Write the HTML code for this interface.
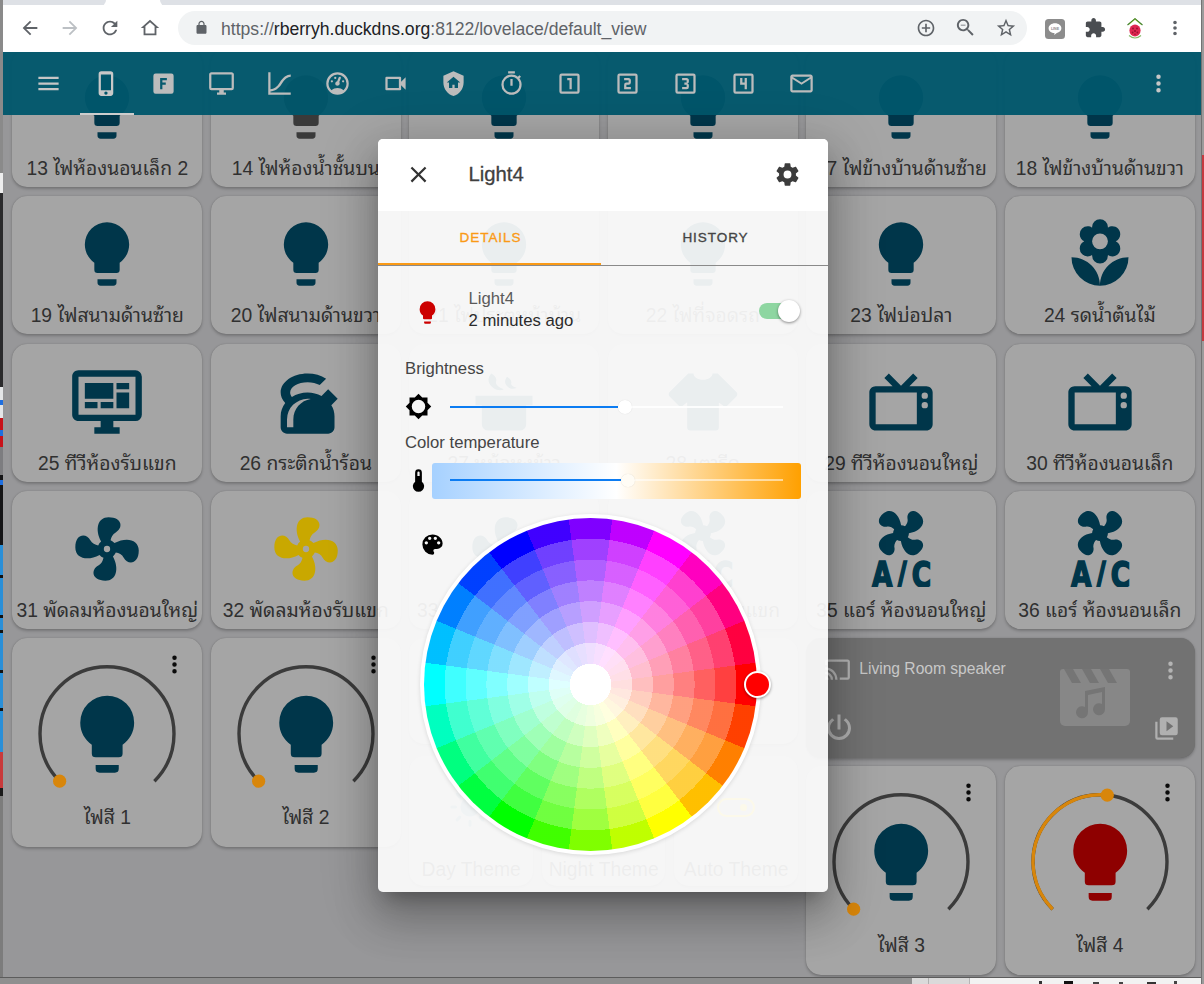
<!DOCTYPE html>
<html lang="th"><head><meta charset="utf-8"><title>Light4</title>
<style>
*{box-sizing:border-box;margin:0;padding:0}
html,body{width:1204px;height:984px;overflow:hidden}
body{position:relative;background:#9b9b9b;font-family:"Liberation Sans","Noto Sans Thai Looped","Sarabun","Loma","Noto Sans Thai",sans-serif;color:#2e2e2e}
#desk{position:absolute;left:0;top:0;width:1204px;height:984px;background:#9a9a9a}
.ds{position:absolute;left:0;width:3px}
#win{position:absolute;left:3px;top:0;width:1198px;height:977px;overflow:hidden;background:#979799}
#tabstrip{position:absolute;left:0;top:0;width:1199px;height:6px;background:#fff}
#tabstrip i{position:absolute;left:0;top:-6px;width:103px;height:11.5px;background:#dee1e6;border-radius:0 0 6px 0}
#tabstrip b{position:absolute;left:157px;top:-6px;width:1042px;height:11.5px;background:#dee1e6;border-radius:0 0 0 6px}
#toolbar{position:absolute;left:0;top:5px;width:1199px;height:47px;background:#fff}
#omni{position:absolute;left:175px;top:6px;width:849px;height:34px;border-radius:17px;background:#f1f3f4}
#url{position:absolute;left:43px;top:8px;font-size:17.6px;line-height:20px;color:#5f6368;white-space:nowrap;letter-spacing:0}
#url b{font-weight:normal;color:#202124}
#page{position:absolute;left:0;top:0;width:1199px;height:978px}
.card{position:absolute;background:#a5a5a5;border-radius:15px;box-shadow:0 1.5px 3px rgba(0,0,0,.22),0 0 1px rgba(0,0,0,.2);width:190px;height:138.6px}
.bi{position:absolute;left:57px;top:20.5px;width:76px;height:76px}
.bl{position:absolute;left:-10px;right:-10px;top:106.5px;text-align:center;font-size:19.3px;line-height:28px;white-space:nowrap;color:#303030}
.lc{height:208.7px}
.ll{position:absolute;left:0;right:0;top:165.5px;text-align:center;font-size:19.3px;line-height:28px;color:#303030}
.media{background:#727272}
.mt{position:absolute;left:53px;top:20px;font-size:15.6px;line-height:22px;color:#c8c8c8}
#hdr{position:absolute;left:0;top:52px;width:1199px;height:63px;background:rgba(0,87,108,.955)}
#dlg{position:absolute;left:375px;top:139px;width:450px;height:753px;background:rgba(253,253,253,.925);border-radius:5px;box-shadow:0 12px 17px -8px rgba(0,0,0,.27),0 27px 43px 3px rgba(0,0,0,.19),0 10px 52px 9px rgba(0,0,0,.15);overflow:hidden}
#dh{position:absolute;left:0;top:0;width:450px;height:72px;background:rgba(255,255,255,.97)}
#dh .t{position:absolute;left:90.5px;top:21px;font-size:20.3px;line-height:28px;color:#404040;font-weight:normal;-webkit-text-stroke:.3px #404040}
.tab{position:absolute;top:72px;width:225px;height:54px;text-align:center;font-size:13.5px;line-height:54px;letter-spacing:.95px;-webkit-text-stroke:.35px currentColor}
.lab{position:absolute;left:27px;font-size:16.7px;line-height:22px;color:#454545}
.sl{position:absolute;left:72px;width:333px;height:2.2px;background:rgba(255,255,255,.85)}
.sl i{position:absolute;left:0;top:0;height:2.2px;background:#0c7cf2}
.kn{position:absolute;width:13.5px;height:13.5px;border-radius:50%;background:#fff;box-shadow:0 0 1px rgba(0,0,0,.15)}
#wheel{position:absolute;left:41.9px;top:374.8px;width:341px;height:341px;border-radius:50%;background:#fff;box-shadow:0 1px 4px rgba(0,0,0,.12)}
#wheel i{position:absolute;left:3.8px;top:3.8px;width:333.4px;height:333.4px;border-radius:50%;background:radial-gradient(circle closest-side,rgba(255,255,255,1.000) 0.0% 12.5%,rgba(255,255,255,0.875) 12.5% 25.0%,rgba(255,255,255,0.750) 25.0% 37.5%,rgba(255,255,255,0.625) 37.5% 50.0%,rgba(255,255,255,0.500) 50.0% 62.5%,rgba(255,255,255,0.375) 62.5% 75.0%,rgba(255,255,255,0.250) 75.0% 87.5%,rgba(255,255,255,0.000) 87.5% 100.0%),conic-gradient(from 82.5deg,hsl(0,100%,50%) 0deg 15deg,hsl(15,100%,50%) 15deg 30deg,hsl(30,100%,50%) 30deg 45deg,hsl(45,100%,50%) 45deg 60deg,hsl(60,100%,50%) 60deg 75deg,hsl(75,100%,50%) 75deg 90deg,hsl(90,100%,50%) 90deg 105deg,hsl(105,100%,50%) 105deg 120deg,hsl(120,100%,50%) 120deg 135deg,hsl(135,100%,50%) 135deg 150deg,hsl(150,100%,50%) 150deg 165deg,hsl(165,100%,50%) 165deg 180deg,hsl(180,100%,50%) 180deg 195deg,hsl(195,100%,50%) 195deg 210deg,hsl(210,100%,50%) 210deg 225deg,hsl(225,100%,50%) 225deg 240deg,hsl(240,100%,50%) 240deg 255deg,hsl(255,100%,50%) 255deg 270deg,hsl(270,100%,50%) 270deg 285deg,hsl(285,100%,50%) 285deg 300deg,hsl(300,100%,50%) 300deg 315deg,hsl(315,100%,50%) 315deg 330deg,hsl(330,100%,50%) 330deg 345deg,hsl(345,100%,50%) 345deg 360deg)}
</style></head><body>
<div id="desk">
 <div class="ds" style="top:0;height:173px;background:#8a8a8a"></div>
 <div class="ds" style="top:173px;height:20px;background:#eee"></div>
 <div class="ds" style="top:193px;height:194px;background:#2a2a2c"></div>
 <div class="ds" style="top:387px;height:31px;background:#e4e6e8"></div>
 <div class="ds" style="top:400px;height:5px;background:#1f6fe0"></div>
 <div class="ds" style="top:418px;height:29px;background:#c8121a"></div>
 <div class="ds" style="top:430px;height:6px;background:#1f6fe0"></div>
 <div class="ds" style="top:447px;height:28px;background:#7d7d80"></div>
 <div class="ds" style="top:475px;height:70px;background:#151517"></div>
 <div class="ds" style="top:480px;height:5px;background:#1f6fe0"></div>
 <div class="ds" style="top:545px;height:207px;background:#2a8fd8"></div>
 <div class="ds" style="top:575px;height:3px;background:#111"></div>
 <div class="ds" style="top:615px;height:3px;background:#111"></div>
 <div class="ds" style="top:630px;height:3px;background:#111"></div>
 <div class="ds" style="top:670px;height:3px;background:#111"></div>
 <div class="ds" style="top:708px;height:3px;background:#111"></div>
 <div class="ds" style="top:752px;height:36px;background:#c93a3c"></div>
 <div class="ds" style="top:788px;height:8px;background:#1b1b1b"></div>
 <div class="ds" style="top:796px;height:188px;background:#7c7c7c"></div>
 <div style="position:absolute;left:0;top:977px;width:1204px;height:7px;background:#8f8f8f;border-top:1px solid #5c5c5c"></div>
 <div style="position:absolute;left:912px;top:978px;width:58px;height:6px;background:#dadada;border-right:1px solid #b5b5b5"></div>
 <div style="position:absolute;left:928px;top:978px;width:1px;height:6px;background:#b0b0b0"></div>
 <div style="position:absolute;left:970px;top:978px;width:234px;height:6px;background:#f2f2f2"></div>
 <div style="position:absolute;left:1039px;top:981px;width:3px;height:3px;background:#333"></div>
 <div style="position:absolute;left:1064px;top:981px;width:9px;height:3px;background:#111"></div>
 <div style="position:absolute;left:1093px;top:982px;width:6px;height:2px;background:#444"></div>
 <div style="position:absolute;left:1119px;top:982px;width:4px;height:2px;background:#444"></div>
 <div style="position:absolute;left:1147px;top:982px;width:9px;height:2px;background:#333"></div>
 <div style="position:absolute;left:1174px;top:981px;width:3px;height:3px;background:#444"></div>
 <div style="position:absolute;left:1201px;top:0;width:3px;height:984px;background:#9b9b9b;border-left:1px solid #737373"></div><div style="position:absolute;left:1202px;top:155px;width:2px;height:186px;background:#c63a40"></div>
</div>
<div id="win">
 <div id="page">
 <div class="card bc" style="left:9.3px;top:48.5px"><svg class="bi" style="fill:#00364a" viewBox="0 0 24 24"><path d="M12,2A7,7 0 0,0 5,9C5,11.38 6.19,13.47 8,14.74V17A1,1 0 0,0 9,18H15A1,1 0 0,0 16,17V14.74C17.81,13.47 19,11.38 19,9A7,7 0 0,0 12,2M9,21A1,1 0 0,0 10,22H14A1,1 0 0,0 15,21V20H9V21Z"/></svg><div class="bl">13 ไฟห้องนอนเล็ก 2</div></div><div class="card bc" style="left:207.8px;top:48.5px"><svg class="bi" style="fill:#3a3a3a" viewBox="0 0 24 24"><path d="M12,2A7,7 0 0,0 5,9C5,11.38 6.19,13.47 8,14.74V17A1,1 0 0,0 9,18H15A1,1 0 0,0 16,17V14.74C17.81,13.47 19,11.38 19,9A7,7 0 0,0 12,2M9,21A1,1 0 0,0 10,22H14A1,1 0 0,0 15,21V20H9V21Z"/></svg><div class="bl">14 ไฟห้องน้ำชั้นบน</div></div><div class="card bc" style="left:406.3px;top:48.5px"><svg class="bi" style="fill:#00364a" viewBox="0 0 24 24"><path d="M12,2A7,7 0 0,0 5,9C5,11.38 6.19,13.47 8,14.74V17A1,1 0 0,0 9,18H15A1,1 0 0,0 16,17V14.74C17.81,13.47 19,11.38 19,9A7,7 0 0,0 12,2M9,21A1,1 0 0,0 10,22H14A1,1 0 0,0 15,21V20H9V21Z"/></svg><div class="bl">15 ไฟห้องน้ำชั้นล่าง</div></div><div class="card bc" style="left:604.8px;top:48.5px"><svg class="bi" style="fill:#00364a" viewBox="0 0 24 24"><path d="M12,2A7,7 0 0,0 5,9C5,11.38 6.19,13.47 8,14.74V17A1,1 0 0,0 9,18H15A1,1 0 0,0 16,17V14.74C17.81,13.47 19,11.38 19,9A7,7 0 0,0 12,2M9,21A1,1 0 0,0 10,22H14A1,1 0 0,0 15,21V20H9V21Z"/></svg><div class="bl">16 ไฟหน้าบ้าน</div></div><div class="card bc" style="left:803.3px;top:48.5px"><svg class="bi" style="fill:#00364a" viewBox="0 0 24 24"><path d="M12,2A7,7 0 0,0 5,9C5,11.38 6.19,13.47 8,14.74V17A1,1 0 0,0 9,18H15A1,1 0 0,0 16,17V14.74C17.81,13.47 19,11.38 19,9A7,7 0 0,0 12,2M9,21A1,1 0 0,0 10,22H14A1,1 0 0,0 15,21V20H9V21Z"/></svg><div class="bl">17 ไฟข้างบ้านด้านซ้าย</div></div><div class="card bc" style="left:1001.8px;top:48.5px"><svg class="bi" style="fill:#00364a" viewBox="0 0 24 24"><path d="M12,2A7,7 0 0,0 5,9C5,11.38 6.19,13.47 8,14.74V17A1,1 0 0,0 9,18H15A1,1 0 0,0 16,17V14.74C17.81,13.47 19,11.38 19,9A7,7 0 0,0 12,2M9,21A1,1 0 0,0 10,22H14A1,1 0 0,0 15,21V20H9V21Z"/></svg><div class="bl">18 ไฟข้างบ้านด้านขวา</div></div><div class="card bc" style="left:9.3px;top:195.9px"><svg class="bi" style="fill:#00364a" viewBox="0 0 24 24"><path d="M12,2A7,7 0 0,0 5,9C5,11.38 6.19,13.47 8,14.74V17A1,1 0 0,0 9,18H15A1,1 0 0,0 16,17V14.74C17.81,13.47 19,11.38 19,9A7,7 0 0,0 12,2M9,21A1,1 0 0,0 10,22H14A1,1 0 0,0 15,21V20H9V21Z"/></svg><div class="bl">19 ไฟสนามด้านซ้าย</div></div><div class="card bc" style="left:207.8px;top:195.9px"><svg class="bi" style="fill:#00364a" viewBox="0 0 24 24"><path d="M12,2A7,7 0 0,0 5,9C5,11.38 6.19,13.47 8,14.74V17A1,1 0 0,0 9,18H15A1,1 0 0,0 16,17V14.74C17.81,13.47 19,11.38 19,9A7,7 0 0,0 12,2M9,21A1,1 0 0,0 10,22H14A1,1 0 0,0 15,21V20H9V21Z"/></svg><div class="bl">20 ไฟสนามด้านขวา</div></div><div class="card bc" style="left:406.3px;top:195.9px"><svg class="bi" style="fill:#00364a" viewBox="0 0 24 24"><path d="M12,2A7,7 0 0,0 5,9C5,11.38 6.19,13.47 8,14.74V17A1,1 0 0,0 9,18H15A1,1 0 0,0 16,17V14.74C17.81,13.47 19,11.38 19,9A7,7 0 0,0 12,2M9,21A1,1 0 0,0 10,22H14A1,1 0 0,0 15,21V20H9V21Z"/></svg><div class="bl">21 ไฟประตูหน้าบ้าน</div></div><div class="card bc" style="left:604.8px;top:195.9px"><svg class="bi" style="fill:#00364a" viewBox="0 0 24 24"><path d="M12,2A7,7 0 0,0 5,9C5,11.38 6.19,13.47 8,14.74V17A1,1 0 0,0 9,18H15A1,1 0 0,0 16,17V14.74C17.81,13.47 19,11.38 19,9A7,7 0 0,0 12,2M9,21A1,1 0 0,0 10,22H14A1,1 0 0,0 15,21V20H9V21Z"/></svg><div class="bl">22 ไฟที่จอดรถ</div></div><div class="card bc" style="left:803.3px;top:195.9px"><svg class="bi" style="fill:#00364a" viewBox="0 0 24 24"><path d="M12,2A7,7 0 0,0 5,9C5,11.38 6.19,13.47 8,14.74V17A1,1 0 0,0 9,18H15A1,1 0 0,0 16,17V14.74C17.81,13.47 19,11.38 19,9A7,7 0 0,0 12,2M9,21A1,1 0 0,0 10,22H14A1,1 0 0,0 15,21V20H9V21Z"/></svg><div class="bl">23 ไฟบ่อปลา</div></div><div class="card bc" style="left:1001.8px;top:195.9px"><svg class="bi" style="fill:#00364a" viewBox="0 0 24 24"><path d="M3,13A9,9 0 0,0 12,22C12,17 7.97,13 3,13M12,5.5A2.5,2.5 0 0,1 14.5,8A2.5,2.5 0 0,1 12,10.5A2.5,2.5 0 0,1 9.5,8A2.5,2.5 0 0,1 12,5.5M5.6,10.25A2.5,2.5 0 0,0 8.1,12.75C8.63,12.75 9.12,12.58 9.5,12.31C9.5,12.37 9.5,12.43 9.5,12.5A2.5,2.5 0 0,0 12,15A2.5,2.5 0 0,0 14.5,12.5C14.5,12.43 14.5,12.37 14.5,12.31C14.88,12.58 15.37,12.75 15.9,12.75C17.28,12.75 18.4,11.63 18.4,10.25C18.4,9.25 17.81,8.4 16.97,8C17.81,7.6 18.4,6.74 18.4,5.75C18.4,4.37 17.28,3.25 15.9,3.25C15.37,3.25 14.88,3.41 14.5,3.69C14.5,3.63 14.5,3.56 14.5,3.5A2.5,2.5 0 0,0 12,1A2.5,2.5 0 0,0 9.5,3.5C9.5,3.56 9.5,3.63 9.5,3.69C9.12,3.41 8.63,3.25 8.1,3.25A2.5,2.5 0 0,0 5.6,5.75C5.6,6.74 6.19,7.6 7.03,8C6.19,8.4 5.6,9.25 5.6,10.25M12,22A9,9 0 0,0 21,13C16,13 12,17 12,22Z"/></svg><div class="bl">24 รดน้ำต้นไม้</div></div><div class="card bc" style="left:9.3px;top:343.5px"><svg class="bi" style="fill:#00364a" viewBox="0 0 24 24"><path d="M21,16V4H3V16H21M21,2A2,2 0 0,1 23,4V16A2,2 0 0,1 21,18H14V20H16V22H8V20H10V18H3C1.89,18 1,17.1 1,16V4C1,2.89 1.89,2 3,2H21M5,6H14V11H5V6M15,6H19V8H15V6M19,9V14H15V9H19M5,12H9V14H5V12M10,12H14V14H10V12Z"/></svg><div class="bl">25 ทีวีห้องรับแขก</div></div><div class="card bc" style="left:207.8px;top:343.5px"><svg class="bi" style="fill:#00364a" viewBox="0 0 24 24"><path d="M12.5,3C7.81,3 4,5.69 4,9V9C4,10.19 4.5,11.34 5.44,12.33C4.53,13.5 4,14.96 4,16.5C4,17.64 4,18.83 4,20C4,21.11 4.89,22 6,22H19C20.11,22 21,21.11 21,20C21,18.85 21,17.61 21,16.5C21,15.28 20.66,14.07 20,13L22,11L19,8L16.9,10.1C15.58,9.38 14.05,9 12.5,9C10.65,9 8.95,9.53 7.55,10.41C7.19,9.97 7,9.5 7,9C7,7.21 9.46,5.75 12.5,5.75C13.93,5.75 15.3,6.08 16.33,6.67L18.35,4.65C16.77,3.59 14.68,3 12.5,3M12.5,11C12.84,11 13.17,11.04 13.5,11.09C10.39,11.57 8,14.25 8,17.5V20H6V17.5A6.5,6.5 0 0,1 12.5,11Z"/></svg><div class="bl">26 กระติกน้ำร้อน</div></div><div class="card bc" style="left:406.3px;top:343.5px"><svg class="bi" style="fill:#00364a" viewBox="0 0 24 24"><path d="M19,19A2,2 0 0,1 17,21H7A2,2 0 0,1 5,19V13H3V10H21V13H19V19M8,3C8,3 6,5 8,7C10,9 12,8 12,8C12,8 9,7 9.5,5.5C10,4 8,3 8,3M13,4C13,4 11.5,5.5 13,7C14.5,8.5 16,7.5 16,7.5C16,7.5 14,7 14.3,6C14.6,5 13,4 13,4Z"/></svg><div class="bl">27 หม้อหุงข้าว</div></div><div class="card bc" style="left:604.8px;top:343.5px"><svg class="bi" style="fill:#00364a" viewBox="0 0 24 24"><path d="M16,21H8A1,1 0 0,1 7,20V12.07L5.7,13.07C5.31,13.46 4.68,13.46 4.29,13.07L1.46,10.29C1.07,9.9 1.07,9.27 1.46,8.88L7.34,3H9C9,4.1 10.34,5 12,5C13.66,5 15,4.1 15,3H16.66L22.54,8.88C22.93,9.27 22.93,9.9 22.54,10.29L19.71,13.12C19.32,13.5 18.69,13.5 18.3,13.12L17,12.12V20A1,1 0 0,1 16,21Z"/></svg><div class="bl">28 เตารีด</div></div><div class="card bc" style="left:803.3px;top:343.5px"><svg class="bi" style="fill:#00364a" viewBox="0 0 24 24"><path d="M8.16,3L6.75,4.41L9.34,7H4C2.89,7 2,7.89 2,9V19C2,20.11 2.89,21 4,21H20C21.11,21 22,20.11 22,19V9C22,7.89 21.11,7 20,7H14.66L17.25,4.41L15.84,3L12,6.84L8.16,3M4,9H17V19H4V9M19.5,9A1,1 0 0,1 20.5,10A1,1 0 0,1 19.5,11A1,1 0 0,1 18.5,10A1,1 0 0,1 19.5,9M19.5,12A1,1 0 0,1 20.5,13A1,1 0 0,1 19.5,14A1,1 0 0,1 18.5,13A1,1 0 0,1 19.5,12Z"/></svg><div class="bl">29 ทีวีห้องนอนใหญ่</div></div><div class="card bc" style="left:1001.8px;top:343.5px"><svg class="bi" style="fill:#00364a" viewBox="0 0 24 24"><path d="M8.16,3L6.75,4.41L9.34,7H4C2.89,7 2,7.89 2,9V19C2,20.11 2.89,21 4,21H20C21.11,21 22,20.11 22,19V9C22,7.89 21.11,7 20,7H14.66L17.25,4.41L15.84,3L12,6.84L8.16,3M4,9H17V19H4V9M19.5,9A1,1 0 0,1 20.5,10A1,1 0 0,1 19.5,11A1,1 0 0,1 18.5,10A1,1 0 0,1 19.5,9M19.5,12A1,1 0 0,1 20.5,13A1,1 0 0,1 19.5,14A1,1 0 0,1 18.5,13A1,1 0 0,1 19.5,12Z"/></svg><div class="bl">30 ทีวีห้องนอนเล็ก</div></div><div class="card bc" style="left:9.3px;top:490.8px"><svg class="bi" style="fill:#00364a" viewBox="0 0 24 24"><path d="M12,11A1,1 0 0,0 11,12A1,1 0 0,0 12,13A1,1 0 0,0 13,12A1,1 0 0,0 12,11M12.5,2C17,2 17.11,5.57 14.75,6.75C13.76,7.24 13.32,8.29 13.13,9.22C13.61,9.42 14.03,9.73 14.35,10.13C18.05,8.13 22.03,8.92 22.03,12.5C22.03,17 18.46,17.1 17.28,14.73C16.78,13.74 15.72,13.3 14.79,13.11C14.59,13.59 14.28,14 13.88,14.34C15.87,18.03 15.08,22 11.5,22C7,22 6.91,18.42 9.27,17.24C10.25,16.75 10.69,15.71 10.89,14.79C10.4,14.59 9.97,14.27 9.65,13.87C5.96,15.85 2,15.07 2,11.5C2,7 5.56,6.89 6.74,9.26C7.24,10.25 8.29,10.68 9.22,10.87C9.41,10.39 9.73,9.97 10.14,9.65C8.15,5.96 8.94,2 12.5,2Z"/></svg><div class="bl">31 พัดลมห้องนอนใหญ่</div></div><div class="card bc" style="left:207.8px;top:490.8px"><svg class="bi" style="fill:#c9a800" viewBox="0 0 24 24"><path d="M12,11A1,1 0 0,0 11,12A1,1 0 0,0 12,13A1,1 0 0,0 13,12A1,1 0 0,0 12,11M12.5,2C17,2 17.11,5.57 14.75,6.75C13.76,7.24 13.32,8.29 13.13,9.22C13.61,9.42 14.03,9.73 14.35,10.13C18.05,8.13 22.03,8.92 22.03,12.5C22.03,17 18.46,17.1 17.28,14.73C16.78,13.74 15.72,13.3 14.79,13.11C14.59,13.59 14.28,14 13.88,14.34C15.87,18.03 15.08,22 11.5,22C7,22 6.91,18.42 9.27,17.24C10.25,16.75 10.69,15.71 10.89,14.79C10.4,14.59 9.97,14.27 9.65,13.87C5.96,15.85 2,15.07 2,11.5C2,7 5.56,6.89 6.74,9.26C7.24,10.25 8.29,10.68 9.22,10.87C9.41,10.39 9.73,9.97 10.14,9.65C8.15,5.96 8.94,2 12.5,2Z"/></svg><div class="bl">32 พัดลมห้องรับแขก</div></div><div class="card bc" style="left:406.3px;top:490.8px"><svg class="bi" style="fill:#00364a" viewBox="0 0 24 24"><path d="M12,11A1,1 0 0,0 11,12A1,1 0 0,0 12,13A1,1 0 0,0 13,12A1,1 0 0,0 12,11M12.5,2C17,2 17.11,5.57 14.75,6.75C13.76,7.24 13.32,8.29 13.13,9.22C13.61,9.42 14.03,9.73 14.35,10.13C18.05,8.13 22.03,8.92 22.03,12.5C22.03,17 18.46,17.1 17.28,14.73C16.78,13.74 15.72,13.3 14.79,13.11C14.59,13.59 14.28,14 13.88,14.34C15.87,18.03 15.08,22 11.5,22C7,22 6.91,18.42 9.27,17.24C10.25,16.75 10.69,15.71 10.89,14.79C10.4,14.59 9.97,14.27 9.65,13.87C5.96,15.85 2,15.07 2,11.5C2,7 5.56,6.89 6.74,9.26C7.24,10.25 8.29,10.68 9.22,10.87C9.41,10.39 9.73,9.97 10.14,9.65C8.15,5.96 8.94,2 12.5,2Z"/></svg><div class="bl">33 พัดลมห้องนอนเล็ก</div></div><div class="card bc" style="left:604.8px;top:490.8px"><svg class="bi" style="fill:#00364a;color:#00364a" viewBox="0 0 24 24"><path d="M6.59,0.66C8.93,-1.15 11.47,1.06 12.04,4.5C12.47,4.5 12.89,4.62 13.27,4.84C13.79,4.24 14.25,3.42 14.07,2.5C13.65,0.35 16.06,-1.39 18.35,1.58C20.16,3.92 17.95,6.46 14.5,7.03C14.5,7.46 14.39,7.89 14.16,8.27C14.76,8.78 15.58,9.24 16.5,9.06C18.63,8.64 20.38,11.04 17.41,13.34C15.07,15.15 12.53,12.94 11.96,9.5C11.53,9.5 11.11,9.37 10.74,9.15C10.22,9.75 9.75,10.58 9.93,11.5C10.35,13.64 7.94,15.39 5.65,12.42C3.83,10.07 6.05,7.53 9.5,6.97C9.5,6.54 9.63,6.12 9.85,5.74C9.25,5.23 8.43,4.76 7.5,4.94C5.37,5.36 3.62,2.96 6.59,0.66Z"/><text transform="scale(.76 1)" x="3.700 14.100 20.300" y="24" font-family="DejaVu Sans,Liberation Sans,sans-serif" font-size="11" font-weight="bold" stroke-width=".55" stroke="currentColor">A/C</text></svg><div class="bl">34 แอร์ ห้องรับแขก</div></div><div class="card bc" style="left:803.3px;top:490.8px"><svg class="bi" style="fill:#00364a;color:#00364a" viewBox="0 0 24 24"><path d="M6.59,0.66C8.93,-1.15 11.47,1.06 12.04,4.5C12.47,4.5 12.89,4.62 13.27,4.84C13.79,4.24 14.25,3.42 14.07,2.5C13.65,0.35 16.06,-1.39 18.35,1.58C20.16,3.92 17.95,6.46 14.5,7.03C14.5,7.46 14.39,7.89 14.16,8.27C14.76,8.78 15.58,9.24 16.5,9.06C18.63,8.64 20.38,11.04 17.41,13.34C15.07,15.15 12.53,12.94 11.96,9.5C11.53,9.5 11.11,9.37 10.74,9.15C10.22,9.75 9.75,10.58 9.93,11.5C10.35,13.64 7.94,15.39 5.65,12.42C3.83,10.07 6.05,7.53 9.5,6.97C9.5,6.54 9.63,6.12 9.85,5.74C9.25,5.23 8.43,4.76 7.5,4.94C5.37,5.36 3.62,2.96 6.59,0.66Z"/><text transform="scale(.76 1)" x="3.700 14.100 20.300" y="24" font-family="DejaVu Sans,Liberation Sans,sans-serif" font-size="11" font-weight="bold" stroke-width=".55" stroke="currentColor">A/C</text></svg><div class="bl">35 แอร์ ห้องนอนใหญ่</div></div><div class="card bc" style="left:1001.8px;top:490.8px"><svg class="bi" style="fill:#00364a;color:#00364a" viewBox="0 0 24 24"><path d="M6.59,0.66C8.93,-1.15 11.47,1.06 12.04,4.5C12.47,4.5 12.89,4.62 13.27,4.84C13.79,4.24 14.25,3.42 14.07,2.5C13.65,0.35 16.06,-1.39 18.35,1.58C20.16,3.92 17.95,6.46 14.5,7.03C14.5,7.46 14.39,7.89 14.16,8.27C14.76,8.78 15.58,9.24 16.5,9.06C18.63,8.64 20.38,11.04 17.41,13.34C15.07,15.15 12.53,12.94 11.96,9.5C11.53,9.5 11.11,9.37 10.74,9.15C10.22,9.75 9.75,10.58 9.93,11.5C10.35,13.64 7.94,15.39 5.65,12.42C3.83,10.07 6.05,7.53 9.5,6.97C9.5,6.54 9.63,6.12 9.85,5.74C9.25,5.23 8.43,4.76 7.5,4.94C5.37,5.36 3.62,2.96 6.59,0.66Z"/><text transform="scale(.76 1)" x="3.700 14.100 20.300" y="24" font-family="DejaVu Sans,Liberation Sans,sans-serif" font-size="11" font-weight="bold" stroke-width=".55" stroke="currentColor">A/C</text></svg><div class="bl">36 แอร์ ห้องนอนเล็ก</div></div><div class="card lc" style="left:9.3px;top:638.0px"><svg style="position:absolute;left:0;top:0" width="190" height="208" viewBox="0 0 190 208"><path d="M47.62,143.18 A67,67 0 1 1 142.38,143.18" fill="none" stroke="#3b3b3b" stroke-width="3.4"/><circle cx="47.62" cy="143.18" r="6.6" fill="#d8860b"/></svg><svg style="position:absolute;left:48.8px;top:49.8px;width:92.4px;height:92.4px;fill:#00364a;" viewBox="0 0 24 24"><path d="M12,2A7,7 0 0,0 5,9C5,11.38 6.19,13.47 8,14.74V17A1,1 0 0,0 9,18H15A1,1 0 0,0 16,17V14.74C17.81,13.47 19,11.38 19,9A7,7 0 0,0 12,2M9,21A1,1 0 0,0 10,22H14A1,1 0 0,0 15,21V20H9V21Z"/></svg><svg style="position:absolute;left:149px;top:13px;width:27px;height:27px;fill:#0a0a0a;" viewBox="0 0 24 24"><path d="M12,16A2,2 0 0,1 14,18A2,2 0 0,1 12,20A2,2 0 0,1 10,18A2,2 0 0,1 12,16M12,10A2,2 0 0,1 14,12A2,2 0 0,1 12,14A2,2 0 0,1 10,12A2,2 0 0,1 12,10M12,4A2,2 0 0,1 14,6A2,2 0 0,1 12,8A2,2 0 0,1 10,6A2,2 0 0,1 12,4Z"/></svg><div class="ll">ไฟสี 1</div></div><div class="card lc" style="left:207.8px;top:638.0px"><svg style="position:absolute;left:0;top:0" width="190" height="208" viewBox="0 0 190 208"><path d="M47.62,143.18 A67,67 0 1 1 142.38,143.18" fill="none" stroke="#3b3b3b" stroke-width="3.4"/><circle cx="47.62" cy="143.18" r="6.6" fill="#d8860b"/></svg><svg style="position:absolute;left:48.8px;top:49.8px;width:92.4px;height:92.4px;fill:#00364a;" viewBox="0 0 24 24"><path d="M12,2A7,7 0 0,0 5,9C5,11.38 6.19,13.47 8,14.74V17A1,1 0 0,0 9,18H15A1,1 0 0,0 16,17V14.74C17.81,13.47 19,11.38 19,9A7,7 0 0,0 12,2M9,21A1,1 0 0,0 10,22H14A1,1 0 0,0 15,21V20H9V21Z"/></svg><svg style="position:absolute;left:149px;top:13px;width:27px;height:27px;fill:#0a0a0a;" viewBox="0 0 24 24"><path d="M12,16A2,2 0 0,1 14,18A2,2 0 0,1 12,20A2,2 0 0,1 10,18A2,2 0 0,1 12,16M12,10A2,2 0 0,1 14,12A2,2 0 0,1 12,14A2,2 0 0,1 10,12A2,2 0 0,1 12,10M12,4A2,2 0 0,1 14,6A2,2 0 0,1 12,8A2,2 0 0,1 10,6A2,2 0 0,1 12,4Z"/></svg><div class="ll">ไฟสี 2</div></div><div class="card lc" style="left:803.3px;top:766.2px"><svg style="position:absolute;left:0;top:0" width="190" height="208" viewBox="0 0 190 208"><path d="M47.62,143.18 A67,67 0 1 1 142.38,143.18" fill="none" stroke="#3b3b3b" stroke-width="3.4"/><circle cx="47.62" cy="143.18" r="6.6" fill="#d8860b"/></svg><svg style="position:absolute;left:48.8px;top:49.8px;width:92.4px;height:92.4px;fill:#00364a;" viewBox="0 0 24 24"><path d="M12,2A7,7 0 0,0 5,9C5,11.38 6.19,13.47 8,14.74V17A1,1 0 0,0 9,18H15A1,1 0 0,0 16,17V14.74C17.81,13.47 19,11.38 19,9A7,7 0 0,0 12,2M9,21A1,1 0 0,0 10,22H14A1,1 0 0,0 15,21V20H9V21Z"/></svg><svg style="position:absolute;left:149px;top:13px;width:27px;height:27px;fill:#0a0a0a;" viewBox="0 0 24 24"><path d="M12,16A2,2 0 0,1 14,18A2,2 0 0,1 12,20A2,2 0 0,1 10,18A2,2 0 0,1 12,16M12,10A2,2 0 0,1 14,12A2,2 0 0,1 12,14A2,2 0 0,1 10,12A2,2 0 0,1 12,10M12,4A2,2 0 0,1 14,6A2,2 0 0,1 12,8A2,2 0 0,1 10,6A2,2 0 0,1 12,4Z"/></svg><div class="ll">ไฟสี 3</div></div><div class="card lc" style="left:1001.8px;top:766.2px"><svg style="position:absolute;left:0;top:0" width="190" height="208" viewBox="0 0 190 208"><path d="M47.62,143.18 A67,67 0 1 1 142.38,143.18" fill="none" stroke="#3b3b3b" stroke-width="3.4"/><path d="M47.62,143.18 A67,67 0 0 1 102.25,29.19" fill="none" stroke="#d8860b" stroke-width="3.4"/><circle cx="102.25" cy="29.19" r="6.6" fill="#d8860b"/></svg><svg style="position:absolute;left:48.8px;top:49.8px;width:92.4px;height:92.4px;fill:#8e0000;" viewBox="0 0 24 24"><path d="M12,2A7,7 0 0,0 5,9C5,11.38 6.19,13.47 8,14.74V17A1,1 0 0,0 9,18H15A1,1 0 0,0 16,17V14.74C17.81,13.47 19,11.38 19,9A7,7 0 0,0 12,2M9,21A1,1 0 0,0 10,22H14A1,1 0 0,0 15,21V20H9V21Z"/></svg><svg style="position:absolute;left:149px;top:13px;width:27px;height:27px;fill:#0a0a0a;" viewBox="0 0 24 24"><path d="M12,16A2,2 0 0,1 14,18A2,2 0 0,1 12,20A2,2 0 0,1 10,18A2,2 0 0,1 12,16M12,10A2,2 0 0,1 14,12A2,2 0 0,1 12,14A2,2 0 0,1 10,12A2,2 0 0,1 12,10M12,4A2,2 0 0,1 14,6A2,2 0 0,1 12,8A2,2 0 0,1 10,6A2,2 0 0,1 12,4Z"/></svg><div class="ll">ไฟสี 4</div></div><div class="card media" style="left:803.3px;top:638px;width:388.5px;height:120px">
<svg style="position:absolute;left:18px;top:18px;width:27px;height:27px;fill:#b5b5b5;" viewBox="0 0 24 24"><path d="M1,10V12A9,9 0 0,1 10,21H12C12,14.92 7.07,10 1,10M1,14V16A5,5 0 0,1 6,21H8A7,7 0 0,0 1,14M1,18V21H4A3,3 0 0,0 1,18M21,3H3C1.89,3 1,3.89 1,5V8H3V5H21V19H14V21H21A2,2 0 0,0 23,19V5C23,3.89 22.1,3 21,3Z"/></svg>
<div class="mt">Living Room speaker</div>
<svg style="position:absolute;left:350.5px;top:19px;width:27px;height:27px;fill:#b4b4b4;" viewBox="0 0 24 24"><path d="M12,16A2,2 0 0,1 14,18A2,2 0 0,1 12,20A2,2 0 0,1 10,18A2,2 0 0,1 12,16M12,10A2,2 0 0,1 14,12A2,2 0 0,1 12,14A2,2 0 0,1 10,12A2,2 0 0,1 12,10M12,4A2,2 0 0,1 14,6A2,2 0 0,1 12,8A2,2 0 0,1 10,6A2,2 0 0,1 12,4Z"/></svg>
<svg style="position:absolute;left:253px;top:25px;width:72px;height:66px" viewBox="0 0 72 66"><path fill="#878787" d="M4,6 H68 a3,3 0 0 1 3,3 V58 a5,5 0 0 1 -5,5 H6 a5,5 0 0 1 -5,-5 V9 a3,3 0 0 1 3,-3 Z"/><path fill="#757575" d="M14,6 l8,14 h-9 l-8,-14z M32,6 l8,14 h-9 l-8,-14z M50,6 l8,14 h-9 l-8,-14z M46,24 v22 a6,6 0 1 1 -3,-5 v-12 l-14,3 v17 a6,6 0 1 1 -3,-5 v-16z"/></svg>
<svg style="position:absolute;left:15px;top:72px;width:36px;height:36px;fill:#b0b0b0;" viewBox="0 0 24 24"><path d="M16.56,5.44L15.11,6.89C16.84,7.94 18,9.83 18,12A6,6 0 0,1 12,18A6,6 0 0,1 6,12C6,9.83 7.16,7.94 8.88,6.88L7.44,5.44C5.36,6.88 4,9.28 4,12A8,8 0 0,0 12,20A8,8 0 0,0 20,12C20,9.28 18.64,6.88 16.56,5.44M13,3H11V13H13"/></svg>
<svg style="position:absolute;left:347px;top:77px;width:27px;height:27px;fill:#b0b0b0;" viewBox="0 0 24 24"><path d="M4,6H2V20A2,2 0 0,0 4,22H18V20H4V6M20,2H8A2,2 0 0,0 6,4V16A2,2 0 0,0 8,18H20A2,2 0 0,0 22,16V4A2,2 0 0,0 20,2M12,14.5V5.5L18,10L12,14.5Z"/></svg>
</div><div class="card" style="left:406.3px;top:638px;width:388.5px;height:106px"></div><div class="card th" style="left:406.3px;top:756px;width:123.7px;height:130px"><div class="bl" style="top:99.5px">Day Theme</div><svg style="position:absolute;left:38px;top:28px;width:46px;height:46px" viewBox="0 0 24 24"><circle cx="12" cy="12" r="5" fill="#4d7f8c"/><g stroke="#4d7f8c" stroke-width="1.600" stroke-linecap="round"><path d="M12,2.500v2M12,19.500v2M2.500,12h2M19.500,12h2M5.300,5.300l1.400,1.400M17.300,17.300l1.400,1.400M5.300,18.700l1.400-1.400M17.300,6.700l1.400-1.400"/></g></svg></div><div class="card th" style="left:538.8px;top:756px;width:123.7px;height:130px"><div class="bl" style="top:99.5px">Night Theme</div><svg style="position:absolute;left:40px;top:30px;width:44px;height:44px" viewBox="0 0 24 24"><path fill="#4d7f8c" d="M17.750,4.090L15.220,6.030L16.130,9.090L13.500,7.280L10.870,9.090L11.780,6.030L9.250,4.090L12.440,4L13.500,1L14.560,4L17.750,4.090M21.250,11L19.610,12.250L20.200,14.230L18.500,13.060L16.800,14.230L17.390,12.250L15.750,11L17.810,10.950L18.500,9L19.190,10.950L21.250,11M18.970,15.950C19.800,15.870 20.690,17.050 20.160,17.800C19.840,18.250 19.500,18.670 19.080,19.070C15.170,23 8.840,23 4.940,19.070C1.030,15.170 1.030,8.830 4.940,4.930C5.340,4.530 5.760,4.170 6.210,3.850C6.960,3.320 8.140,4.210 8.060,5.040C7.790,7.900 8.750,10.870 10.950,13.060C13.140,15.260 16.100,16.220 18.970,15.950Z"/></svg></div><div class="card th" style="left:671.3px;top:756px;width:123.7px;height:130px"><div class="bl" style="top:99.5px">Auto Theme</div><div style="position:absolute;left:43px;top:42px;width:38px;height:19px;border-radius:10px;border:2.500px solid #e8c200"></div><div style="position:absolute;left:66px;top:48px;width:7px;height:7px;border-radius:50%;background:#e8c200"></div></div>
 </div>
 <div id="hdr"><svg style="position:absolute;left:32.2px;top:18.099999999999994px;width:27px;height:27px;fill:#c6c6c6;" viewBox="0 0 24 24"><path d="M3,6H21V8H3V6M3,11H21V13H3V11M3,16H21V18H3V16Z"/></svg><svg style="position:absolute;left:89.5px;top:18.0px;width:27px;height:27px;fill:#c8c8c8;" viewBox="0 0 24 24"><path d="M16,18H7V4H16M11.5,22A1.5,1.5 0 0,1 10,20.5A1.5,1.5 0 0,1 11.5,19A1.5,1.5 0 0,1 13,20.5A1.5,1.5 0 0,1 11.5,22M15.5,1H7.5A2.5,2.5 0 0,0 5,3.5V20.5A2.5,2.5 0 0,0 7.5,23H15.5A2.5,2.5 0 0,0 18,20.5V3.5A2.5,2.5 0 0,0 15.5,1Z"/></svg><svg style="position:absolute;left:147.47px;top:18.0px;width:27px;height:27px;fill:#bcbcbc;" viewBox="0 0 24 24"><path d="M9,7V17H11V13H14V11H11V9H15V7H9M5,3H19A2,2 0 0,1 21,5V19A2,2 0 0,1 19,21H5A2,2 0 0,1 3,19V5A2,2 0 0,1 5,3Z"/></svg><svg style="position:absolute;left:205.44px;top:18.0px;width:27px;height:27px;fill:#bcbcbc;" viewBox="0 0 24 24"><path d="M21,16H3V4H21M21,2H3C1.89,2 1,2.89 1,4V16A2,2 0 0,0 3,18H10V20H8V22H16V20H14V18H21A2,2 0 0,0 23,16V4C23,2.89 22.1,2 21,2Z"/></svg><svg style="position:absolute;left:263.40999999999997px;top:18.0px;width:27px;height:27px;fill:#bcbcbc;" viewBox="0 0 24 24"><path d="M4 19V20H22V22H2V2H4V17C7 17 10 15 12.1 11.4C15.1 6.4 18.4 4 22 4V6C19.2 6 16.5 8.1 13.9 12.5C11.3 16.6 7.7 19 4 19Z"/></svg><svg style="position:absolute;left:321.38px;top:18.0px;width:27px;height:27px;fill:#bcbcbc;" viewBox="0 0 24 24"><path d="M12,2A10,10 0 0,0 2,12A10,10 0 0,0 12,22A10,10 0 0,0 22,12A10,10 0 0,0 12,2M12,4A8,8 0 0,1 20,12C20,14.4 19,16.5 17.3,18C15.9,16.7 14,16 12,16C10,16 8.2,16.7 6.7,18C5,16.5 4,14.4 4,12A8,8 0 0,1 12,4M14,5.89C13.62,5.9 13.26,6.15 13.1,6.54L11.81,9.77L11.71,10C11,10.13 10.41,10.6 10.14,11.26C9.73,12.29 10.23,13.45 11.26,13.86C12.29,14.27 13.45,13.77 13.86,12.74C14.12,12.08 14,11.32 13.57,10.76L13.67,10.5L14.96,7.29L14.97,7.26C15.17,6.75 14.92,6.17 14.41,5.96C14.28,5.91 14.15,5.89 14,5.89M10,6A1,1 0 0,0 9,7A1,1 0 0,0 10,8A1,1 0 0,0 11,7A1,1 0 0,0 10,6M7,9A1,1 0 0,0 6,10A1,1 0 0,0 7,11A1,1 0 0,0 8,10A1,1 0 0,0 7,9M17,9A1,1 0 0,0 16,10A1,1 0 0,0 17,11A1,1 0 0,0 18,10A1,1 0 0,0 17,9Z"/></svg><svg style="position:absolute;left:379.35px;top:18.0px;width:27px;height:27px;fill:#bcbcbc;" viewBox="0 0 24 24"><path d="M15,8V16H5V8H15M16,6H4A1,1 0 0,0 3,7V17A1,1 0 0,0 4,18H16A1,1 0 0,0 17,17V13.5L21,17.5V6.5L17,10.5V7A1,1 0 0,0 16,6Z"/></svg><svg style="position:absolute;left:437.32px;top:18.0px;width:27px;height:27px;fill:#bcbcbc;" viewBox="0 0 24 24"><path d="M11,13H13V16H16V11H18L12,6L6,11H8V16H11V13M12,1L21,5V11C21,16.55 17.16,21.74 12,23C6.84,21.74 3,16.55 3,11V5L12,1Z"/></svg><svg style="position:absolute;left:495.28999999999996px;top:18.0px;width:27px;height:27px;fill:#bcbcbc;" viewBox="0 0 24 24"><path d="M12,20A7,7 0 0,1 5,13A7,7 0 0,1 12,6A7,7 0 0,1 19,13A7,7 0 0,1 12,20M19.03,7.39L20.45,5.97C20,5.46 19.55,5 19.04,4.56L17.62,6C16.07,4.74 14.12,4 12,4A9,9 0 0,0 3,13A9,9 0 0,0 12,22C17,22 21,17.97 21,13C21,10.88 20.26,8.93 19.03,7.39M11,14H13V8H11M15,1H9V3H15V1Z"/></svg><svg style="position:absolute;left:553.26px;top:18.0px;width:27px;height:27px;fill:#bcbcbc;" viewBox="0 0 24 24"><path d="M19,19H5V5H19M19,3H5A2,2 0 0,0 3,5V19A2,2 0 0,0 5,21H19A2,2 0 0,0 21,19V5A2,2 0 0,0 19,3M12,17H14V7H10V9H12"/></svg><svg style="position:absolute;left:611.23px;top:18.0px;width:27px;height:27px;fill:#bcbcbc;" viewBox="0 0 24 24"><path d="M15,15H11V13H13A2,2 0 0,0 15,11V9C15,7.89 14.1,7 13,7H9V9H13V11H11A2,2 0 0,0 9,13V17H15M19,19H5V5H19M19,3H5A2,2 0 0,0 3,5V19A2,2 0 0,0 5,21H19A2,2 0 0,0 21,19V5A2,2 0 0,0 19,3Z"/></svg><svg style="position:absolute;left:669.2px;top:18.0px;width:27px;height:27px;fill:#bcbcbc;" viewBox="0 0 24 24"><path d="M15,15V13.5A1.5,1.5 0 0,0 13.5,12A1.5,1.5 0 0,0 15,10.5V9C15,7.89 14.1,7 13,7H9V9H13V11H11V13H13V15H9V17H13A2,2 0 0,0 15,15M19,19H5V5H19M19,3H5A2,2 0 0,0 3,5V19A2,2 0 0,0 5,21H19A2,2 0 0,0 21,19V5A2,2 0 0,0 19,3Z"/></svg><svg style="position:absolute;left:727.17px;top:18.0px;width:27px;height:27px;fill:#bcbcbc;" viewBox="0 0 24 24"><path d="M13,17H15V7H13V11H11V7H9V13H13M19,19H5V5H19M19,3H5A2,2 0 0,0 3,5V19A2,2 0 0,0 5,21H19A2,2 0 0,0 21,19V5A2,2 0 0,0 19,3Z"/></svg><svg style="position:absolute;left:785.14px;top:18.0px;width:27px;height:27px;fill:#bcbcbc;" viewBox="0 0 24 24"><path d="M22 6C22 4.9 21.1 4 20 4H4C2.9 4 2 4.9 2 6V18C2 19.1 2.9 20 4 20H20C21.1 20 22 19.1 22 18V6M20 6L12 11L4 6H20M20 18H4V8L12 13L20 8V18Z"/></svg><svg style="position:absolute;left:1141.5px;top:18.0px;width:27px;height:27px;fill:#c6c6c6;" viewBox="0 0 24 24"><path d="M12,16A2,2 0 0,1 14,18A2,2 0 0,1 12,20A2,2 0 0,1 10,18A2,2 0 0,1 12,16M12,10A2,2 0 0,1 14,12A2,2 0 0,1 12,14A2,2 0 0,1 10,12A2,2 0 0,1 12,10M12,4A2,2 0 0,1 14,6A2,2 0 0,1 12,8A2,2 0 0,1 10,6A2,2 0 0,1 12,4Z"/></svg><div style="position:absolute;left:77px;top:60.7px;width:54px;height:2.3px;background:#cdcdcd"></div></div>
 <div id="tabstrip"><i></i><b></b></div>
 <div id="toolbar">
  <svg style="position:absolute;left:16px;top:12px;width:22px;height:22px" viewBox="0 0 24 24"><path fill="#5f6368" d="M20,11H7.83l5.59-5.59L12,4l-8,8 8,8 1.41-1.41L7.83,13H20z"/></svg>
  <svg style="position:absolute;left:56px;top:12px;width:22px;height:22px" viewBox="0 0 24 24"><path fill="#bcc0c4" d="M4,11h12.17l-5.59-5.59L12,4l8,8-8,8-1.41-1.41L16.17,13H4z"/></svg>
  <svg style="position:absolute;left:96px;top:12px;width:22px;height:22px" viewBox="0 0 24 24"><path fill="#5f6368" d="M17.65,6.35C16.2,4.9 14.21,4 12,4c-4.42,0-7.99,3.58-7.99,8s3.57,8 7.99,8c3.73,0 6.84-2.55 7.73-6h-2.08c-.82,2.33-3.04,4-5.65,4-3.31,0-6-2.69-6-6s2.69-6 6-6c1.66,0 3.14.69 4.22,1.78L13,11h7V4l-2.35,2.35z"/></svg>
  <svg style="position:absolute;left:136px;top:12px;width:22px;height:22px" viewBox="0 0 24 24"><path fill="#5f6368" d="M12,5.69l5,4.5V18H7v-7.81l5-4.5M12,3L2,12h3v8h14v-8h3L12,3z"/></svg>
  <div id="omni">
   <svg style="position:absolute;left:16px;top:9px;width:15px;height:15px" viewBox="0 0 24 24"><path fill="#5f6368" d="M18,8h-1V6c0-2.76-2.24-5-5-5S7,3.240 7,6v2H6c-1.100,0-2,.9-2,2v10c0,1.100.9,2 2,2h12c1.100,0 2-.9 2-2V10c0-1.100-.9-2-2-2zM9,6c0-1.660 1.340-3 3-3s3,1.340 3,3v2H9V6z"/></svg>
   <div id="url">https://<b>rberryh.duckdns.org</b>:8122/lovelace/default_view</div>
   <svg style="position:absolute;left:738px;top:7px;width:20px;height:20px" viewBox="0 0 24 24"><path fill="#5f6368" d="M12,2C6.480,2 2,6.480 2,12s4.480,10 10,10 10-4.480 10-10S17.520,2 12,2zm0,18c-4.410,0-8-3.590-8-8s3.590-8 8-8 8,3.590 8,8-3.590,8-8,8zm1-13h-2v4H7v2h4v4h2v-4h4v-2h-4V7z"/></svg>
   <svg style="position:absolute;left:776px;top:4.5px;width:23px;height:23px" viewBox="0 0 24 24"><path fill="#5f6368" d="M15.500,14h-.79l-.28-.27C15.410,12.590 16,11.110 16,9.500 16,5.910 13.090,3 9.500,3S3,5.910 3,9.500 5.910,16 9.500,16c1.610,0 3.090-.59 4.230-1.570l.27.28v.79l5,4.990L20.490,19l-4.990-5zm-6,0C7.010,14 5,11.990 5,9.500S7.010,5 9.500,5 14,7.010 14,9.500 11.990,14 9.500,14zM7,9h5v1H7z"/></svg>
   <svg style="position:absolute;left:817px;top:6px;width:22px;height:22px" viewBox="0 0 24 24"><path fill="#5f6368" d="M22,9.240l-7.190-.62L12,2 9.190,8.630 2,9.240l5.460,4.730L5.820,21 12,17.270 18.180,21l-1.630-7.030L22,9.240zM12,15.400l-3.760,2.270 1-4.280-3.320-2.880 4.380-.38L12,6.100l1.710,4.040 4.380.38-3.320,2.880 1,4.280L12,15.400z"/></svg>
  </div>
  <div style="position:absolute;left:1042px;top:14px;width:20px;height:20px;border-radius:3.5px;background:#8c8c8c"></div>
  <svg style="position:absolute;left:1042px;top:14px;width:20px;height:20px" viewBox="0 0 20 20"><path fill="#fff" d="M10,4.200c3.600,0 6.400,2.200 6.400,5 0,2.300-2,4.200-4.600,4.800l-2.600,2 .3-1.900C6.300,13.900 3.600,11.900 3.600,9.200c0-2.800 2.800-5 6.400-5z"/><text x="10" y="10.700" text-anchor="middle" font-size="3.600" font-weight="bold" fill="#8c8c8c" font-family="Liberation Sans,sans-serif">LINE</text></svg>
  <svg style="position:absolute;left:1081px;top:12px;width:22px;height:22px" viewBox="0 0 24 24"><path fill="#4a4d51" d="M20.500,11H19V7c0-1.100-.9-2-2-2h-4V3.500C13,2.120 11.880,1 10.500,1S8,2.120 8,3.500V5H4c-1.100,0-1.990.9-1.990,2v3.800H3.500c1.490,0 2.700,1.210 2.700,2.700s-1.210,2.700-2.700,2.700H2V20c0,1.100.9,2 2,2h3.800v-1.500c0-1.490 1.210-2.700 2.700-2.700 1.490,0 2.700,1.210 2.700,2.700V22H17c1.100,0 2-.9 2-2v-4h1.500c1.380,0 2.500-1.120 2.500-2.500S21.880,11 20.500,11z"/></svg>
  <svg style="position:absolute;left:1119px;top:11px;width:26px;height:26px" viewBox="0 0 26 26"><path d="M13,2 L20,8.500 L18.500,8.500 L13,4 L7.500,8.500 L6,8.500Z" fill="#c9e265"/><path d="M5.500,9 L13,2.600 L20.500,9" fill="none" stroke="#3f7f2c" stroke-width="1.100"/><ellipse cx="13" cy="14.500" rx="5.600" ry="6" fill="#df2650"/><g fill="#9c1233"><circle cx="11" cy="12.500" r="1"/><circle cx="15" cy="12.500" r="1"/><circle cx="13" cy="15" r="1.100"/><circle cx="10.600" cy="16.500" r=".9"/><circle cx="15.400" cy="16.500" r=".9"/><circle cx="13" cy="18.300" r=".8"/></g><path d="M7,19.500 Q13,24.500 19,19.500" fill="none" stroke="#86b86a" stroke-width="1.200"/></svg>

  <svg style="position:absolute;left:1161px;top:12px;width:22px;height:22px;fill:#5f6368;" viewBox="0 0 24 24"><path d="M12,16A2,2 0 0,1 14,18A2,2 0 0,1 12,20A2,2 0 0,1 10,18A2,2 0 0,1 12,16M12,10A2,2 0 0,1 14,12A2,2 0 0,1 12,14A2,2 0 0,1 10,12A2,2 0 0,1 12,10M12,4A2,2 0 0,1 14,6A2,2 0 0,1 12,8A2,2 0 0,1 10,6A2,2 0 0,1 12,4Z"/></svg>
 </div>
 <div id="dlg">
  <div id="dh"><svg style="position:absolute;left:26.9px;top:21.6px;width:27px;height:27px;fill:#333;" viewBox="0 0 24 24"><path d="M19,6.41L17.59,5L12,10.59L6.41,5L5,6.41L10.59,12L5,17.59L6.41,19L12,13.41L17.59,19L19,17.59L13.41,12L19,6.41Z"/></svg><div class="t">Light4</div><svg style="position:absolute;left:395.8px;top:21.5px;width:27px;height:27px;fill:#3c3c3c;" viewBox="0 0 24 24"><path d="M12,15.5A3.5,3.5 0 0,1 8.5,12A3.5,3.5 0 0,1 12,8.5A3.5,3.5 0 0,1 15.5,12A3.5,3.5 0 0,1 12,15.5M19.43,12.97C19.47,12.65 19.5,12.33 19.5,12C19.5,11.67 19.47,11.34 19.43,11L21.54,9.37C21.73,9.22 21.78,8.95 21.66,8.73L19.66,5.27C19.54,5.05 19.27,4.96 19.05,5.05L16.56,6.05C16.04,5.66 15.5,5.32 14.87,5.07L14.5,2.42C14.46,2.18 14.25,2 14,2H10C9.75,2 9.54,2.18 9.5,2.42L9.13,5.07C8.5,5.32 7.96,5.66 7.44,6.05L4.95,5.05C4.73,4.96 4.46,5.05 4.34,5.27L2.34,8.73C2.21,8.95 2.27,9.22 2.46,9.37L4.57,11C4.53,11.34 4.5,11.67 4.5,12C4.5,12.33 4.53,12.65 4.57,12.97L2.46,14.63C2.27,14.78 2.21,15.05 2.34,15.27L4.34,18.73C4.46,18.95 4.73,19.03 4.95,18.95L7.44,17.94C7.96,18.34 8.5,18.68 9.13,18.93L9.5,21.58C9.54,21.82 9.75,22 10,22H14C14.25,22 14.46,21.82 14.5,21.58L14.87,18.93C15.5,18.67 16.04,18.34 16.56,17.94L19.05,18.95C19.27,19.03 19.54,18.95 19.66,18.73L21.66,15.27C21.78,15.05 21.73,14.78 21.54,14.63L19.43,12.97Z"/></svg></div>
  <div class="tab" style="left:0;color:#fa9a16">DETAILS</div>
  <div class="tab" style="left:225px;color:#444">HISTORY</div>
  <div style="position:absolute;left:0;top:125.6px;width:450px;height:1.2px;background:#8a8a8a"></div>
  <div style="position:absolute;left:0;top:123.6px;width:223px;height:2.8px;background:#fa9a16"></div>
  <svg style="position:absolute;left:35.9px;top:160px;width:27px;height:27px;fill:#cc0000;" viewBox="0 0 24 24"><path d="M12,2A7,7 0 0,0 5,9C5,11.38 6.19,13.47 8,14.74V17A1,1 0 0,0 9,18H15A1,1 0 0,0 16,17V14.74C17.81,13.47 19,11.38 19,9A7,7 0 0,0 12,2M9,21A1,1 0 0,0 10,22H14A1,1 0 0,0 15,21V20H9V21Z"/></svg>
  <div class="lab" style="left:90.5px;top:149px;color:#5a5a5a">Light4</div>
  <div class="lab" style="left:90.5px;top:171px;color:#2b2b2b">2 minutes ago</div>
  <div style="position:absolute;left:381px;top:163.5px;width:40px;height:16px;border-radius:8px;background:#8ed6a1"></div>
  <div style="position:absolute;left:399.5px;top:160.5px;width:22.5px;height:22.5px;border-radius:50%;background:#fff;box-shadow:0 1px 3px rgba(0,0,0,.45)"></div>
  <div class="lab" style="top:219px">Brightness</div>
  <svg style="position:absolute;left:26.9px;top:254.2px;width:27px;height:27px;fill:#000;" viewBox="0 0 24 24"><path d="M12,18A6,6 0 0,1 6,12A6,6 0 0,1 12,6A6,6 0 0,1 18,12A6,6 0 0,1 12,18M20,15.31L23.31,12L20,8.69V4H15.31L12,0.69L8.69,4H4V8.69L0.69,12L4,15.31V20H8.69L12,23.31L15.31,20H20V15.31Z"/></svg>
  <div class="sl" style="top:266.6px"><i style="width:168px"></i></div>
  <div class="kn" style="left:240.2px;top:261px"></div>
  <div class="lab" style="top:293px">Color temperature</div>
  <svg style="position:absolute;left:26.9px;top:327.5px;width:27px;height:27px;fill:#000;" viewBox="0 0 24 24"><path d="M15 13V5A3 3 0 0 0 9 5V13A5 5 0 1 0 15 13M12 4A1 1 0 0 1 13 5V8H11V5A1 1 0 0 1 12 4Z"/></svg>
  <div style="position:absolute;left:54px;top:323.6px;width:369px;height:36.2px;border-radius:3px;background:linear-gradient(to right,rgb(166,209,255) 0%,#fff 50%,rgb(255,160,0) 100%)"></div>
  <div class="sl" style="top:340.3px;background:rgba(255,255,255,.55)"><i style="width:171px"></i></div>
  <div class="kn" style="left:243px;top:334.6px;background:#fffcf5"></div>
  <svg style="position:absolute;left:41px;top:391.7px;width:27px;height:27px;fill:#000;" viewBox="0 0 24 24"><path d="M17.5,12A1.5,1.5 0 0,1 16,10.5A1.5,1.5 0 0,1 17.5,9A1.5,1.5 0 0,1 19,10.5A1.5,1.5 0 0,1 17.5,12M14.5,8A1.5,1.5 0 0,1 13,6.5A1.5,1.5 0 0,1 14.5,5A1.5,1.5 0 0,1 16,6.5A1.5,1.5 0 0,1 14.5,8M9.5,8A1.5,1.5 0 0,1 8,6.5A1.5,1.5 0 0,1 9.5,5A1.5,1.5 0 0,1 11,6.5A1.5,1.5 0 0,1 9.5,8M6.5,12A1.5,1.5 0 0,1 5,10.5A1.5,1.5 0 0,1 6.5,9A1.5,1.5 0 0,1 8,10.5A1.5,1.5 0 0,1 6.5,12M12,3A9,9 0 0,0 3,12A9,9 0 0,0 12,21A1.5,1.5 0 0,0 13.5,19.5C13.5,19.11 13.35,18.76 13.11,18.5C12.88,18.23 12.73,17.88 12.73,17.5A1.5,1.5 0 0,1 14.23,16H16A5,5 0 0,0 21,11C21,6.58 16.97,3 12,3Z"/></svg>
  <div id="wheel"><i></i></div>
  <div style="position:absolute;left:366px;top:532px;width:27px;height:27px;border-radius:50%;background:#f00;border:2px solid #fff;box-shadow:0 1px 3px rgba(0,0,0,.4)"></div>
 </div>
</div>
</body></html>
